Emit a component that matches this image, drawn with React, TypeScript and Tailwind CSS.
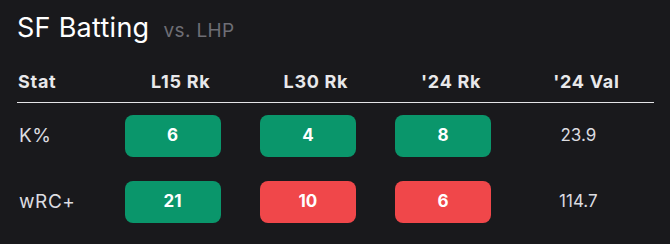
import React from 'react'

type Cell = { rank: number; good: boolean }
type Row = { stat: string; l15: Cell; l30: Cell; y24: Cell; val: string }

const rows: Row[] = [
  {
    stat: 'K%',
    l15: { rank: 6, good: true },
    l30: { rank: 4, good: true },
    y24: { rank: 8, good: true },
    val: '23.9',
  },
  {
    stat: 'wRC+',
    l15: { rank: 21, good: true },
    l30: { rank: 10, good: false },
    y24: { rank: 6, good: false },
    val: '114.7',
  },
]

function RankBadge({ cell }: { cell: Cell }) {
  return (
    <div
      className={`w-[96px] h-[42px] rounded-lg flex items-center justify-center text-[17px] font-bold text-white ${
        cell.good ? 'bg-[#0a966b]' : 'bg-[#f0474a]'
      }`}
    >
      {cell.rank}
    </div>
  )
}

export default function App() {
  return (
    <div
      className="w-[670px] h-[244px] bg-[#19191c] text-[#e4e4e7] overflow-hidden"
      style={{ fontFamily: 'Inter, "Liberation Sans", sans-serif' }}
    >
      <div className="px-[17px] pt-[14px]">
        <div className="flex items-baseline gap-[14px]">
          <h2 className="text-[27px] font-normal text-white leading-none tracking-[0.01em]">SF Batting</h2>
          <span className="text-[19px] text-[#6e6e75] leading-none tracking-[0.02em]">vs. LHP</span>
        </div>

        <div className="w-[637px] mt-[32px]">
          <div className="grid grid-cols-[96px_repeat(4,1fr)] leading-[18px] pb-[11px] text-[18px] font-bold tracking-[0.04em] text-[#e8e8ea] border-b border-[#e4e4e7]">
            <div className="pl-[1px]">Stat</div>
            <div className="text-center">L15 Rk</div>
            <div className="text-center">L30 Rk</div>
            <div className="text-center">'24 Rk</div>
            <div className="text-center">'24 Val</div>
          </div>

          {rows.map((r) => (
            <div key={r.stat} className="grid grid-cols-[96px_repeat(4,1fr)] items-center h-[66px]">
              <div className="pl-[2px] text-[19px] tracking-[0.03em] text-[#dcdce0]">{r.stat}</div>
              <div className="flex justify-center pr-[16px]">
                <RankBadge cell={r.l15} />
              </div>
              <div className="flex justify-center pr-[16px]">
                <RankBadge cell={r.l30} />
              </div>
              <div className="flex justify-center pr-[16px]">
                <RankBadge cell={r.y24} />
              </div>
              <div className="text-center pr-[16px] text-[17px] text-[#dcdce0]">{r.val}</div>
            </div>
          ))}
        </div>
      </div>
    </div>
  )
}
